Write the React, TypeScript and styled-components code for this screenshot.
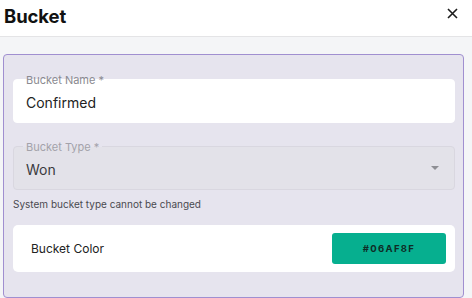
import React from "react";
import styled, { createGlobalStyle } from "styled-components";

const GlobalStyle = createGlobalStyle`
    body {
        margin: 0;
        background: #ffffff;
        font-family: Inter, "Noto Sans", Arial, sans-serif;
    }
`;

const Header = styled.div`
    height: 36px;
    display: flex;
    align-items: center;
    justify-content: space-between;
    padding: 0 14px 0 4px;
    border-bottom: 1px solid #e4e4e6;
`;

const Title = styled.h2`
    margin: 0;
    margin-top: -4px;
    font-size: 18.5px;
    font-weight: 700;
    color: #111111;
    letter-spacing: -0.1px;
`;

const CloseButton = styled.button`
    border: none;
    background: transparent;
    padding: 0;
    margin-top: -10px;
    display: flex;
    cursor: pointer;
`;

const Body = styled.div`
    background: #f4f5f7;
    padding: 17px 8px 0 3px;
`;

const Panel = styled.div`
    background: #e6e4ee;
    border: 1px solid #a08fd0;
    border-radius: 4px;
    padding: 24px 8px 25px 9px;
    display: flex;
    flex-direction: column;
`;

const Field = styled.div<{ $disabled?: boolean }>`
    position: relative;
    height: 44px;
    box-sizing: border-box;
    background: ${({ $disabled }) => ($disabled ? "#e3e2e9" : "#ffffff")};
    border: 1px solid ${({ $disabled }) => ($disabled ? "#d9d7e0" : "#ffffff")};
    border-radius: 4px;
    display: flex;
    align-items: center;
    justify-content: space-between;
    padding: 0 13px 0 12px;
    margin-top: ${({ $disabled }) => ($disabled ? "23px" : "0")};
`;

const FloatLabel = styled.span<{ $disabled?: boolean }>`
    position: absolute;
    left: 9px;
    top: -6px;
    padding: 0 3px;
    font-size: 11px;
    line-height: 12px;
    color: ${({ $disabled }) => ($disabled ? "#a3a2aa" : "#8a8a90")};
    background: ${({ $disabled }) =>
        $disabled ? "linear-gradient(#e6e4ee 50%, #e3e2e9 50%)" : "transparent"};
`;

const Value = styled.span<{ $muted?: boolean }>`
    font-size: 14px;
    color: ${({ $muted }) => ($muted ? "#3a3a3e" : "#222222")};
    padding-top: 2px;
`;

const Caret = styled.span`
    width: 0;
    height: 0;
    border-left: 4px solid transparent;
    border-right: 4px solid transparent;
    border-top: 4px solid #8e8e94;
    margin-right: 2px;
`;

const Helper = styled.p`
    margin: 8px 0 0;
    font-size: 10px;
    color: #4a4a50;
`;

const ColorCard = styled.div`
    margin-top: 15px;
    height: 47px;
    background: #ffffff;
    border-radius: 5px;
    display: flex;
    align-items: center;
    justify-content: space-between;
    padding: 0 9px 0 18px;
`;

const ColorLabel = styled.span`
    font-size: 12px;
    color: #222222;
`;

const Swatch = styled.button<{ $color: string }>`
    width: 114px;
    height: 31px;
    border: none;
    border-radius: 3px;
    background: ${({ $color }) => $color};
    font-family: inherit;
    font-size: 9.5px;
    font-weight: 700;
    letter-spacing: 1.3px;
    color: #0f2c26;
    cursor: pointer;
`;

export default function App() {
    const color = "#06AF8F";
    return (
        <>
            <GlobalStyle />
            <Header>
                <Title>Bucket</Title>
                <CloseButton aria-label="close">
                    <svg width="11" height="11" viewBox="0 0 11 11">
                        <path d="M1 1 L10 10 M10 1 L1 10" stroke="#1c1c1c" strokeWidth="1.6" />
                    </svg>
                </CloseButton>
            </Header>
            <Body>
                <Panel>
                    <Field>
                        <FloatLabel>Bucket Name *</FloatLabel>
                        <Value>Confirmed</Value>
                    </Field>
                    <Field $disabled>
                        <FloatLabel $disabled>Bucket Type *</FloatLabel>
                        <Value $muted>Won</Value>
                        <Caret />
                    </Field>
                    <Helper>System bucket type cannot be changed</Helper>
                    <ColorCard>
                        <ColorLabel>Bucket Color</ColorLabel>
                        <Swatch $color={color}>{color}</Swatch>
                    </ColorCard>
                </Panel>
            </Body>
        </>
    );
}
